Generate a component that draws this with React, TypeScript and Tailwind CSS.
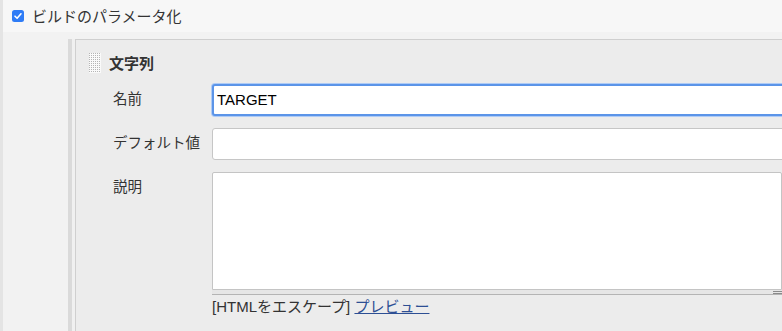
import React from "react";

const font = { fontFamily: "'Liberation Sans', 'Noto Sans CJK JP', sans-serif" };

function Checkbox() {
  return (
    <svg width="12" height="12" viewBox="0 0 12 12">
      <rect x="0" y="0" width="12" height="12" rx="2.5" fill="#2f7cf6" />
      <path d="M3 6.2 L5.1 8.3 L9 3.8" stroke="#fff" strokeWidth="1.6" fill="none" strokeLinecap="round" strokeLinejoin="round" />
    </svg>
  );
}

function Grip() {
  return (
    <svg width="12" height="20" viewBox="0 0 12 20">
      <defs>
        <pattern id="dots" width="2" height="2" patternUnits="userSpaceOnUse">
          <rect width="2" height="2" fill="#fafafa" />
          <rect width="1" height="1" fill="#b5b5b5" />
        </pattern>
      </defs>
      <rect width="12" height="20" fill="url(#dots)" />
    </svg>
  );
}

export default function App() {
  return (
    <div style={font} className="w-[782px] h-[331px] overflow-hidden flex bg-[#f2f2f2] text-[#333]">
      {/* left edge strip */}
      <div className="w-[3px] shrink-0 bg-[#e4e4e4]" />

      <div className="flex-1 flex flex-col min-w-0">
        {/* header row */}
        <div className="h-[32px] shrink-0 bg-[#f7f7f7] flex items-center pl-[9px] gap-[8px]">
          <Checkbox />
          <span className="text-[15px] leading-none">ビルドのパラメータ化</span>
        </div>

        <div className="flex flex-1 pt-[7px]">
          <div className="w-[65px] shrink-0" />
          <div className="w-[4px] shrink-0 bg-[#dadada]" />
          <div className="w-[3px] shrink-0 bg-[#f0f0f0]" />

          {/* parameter panel */}
          <div className="w-[760px] shrink-0 bg-[#ececec] border-l border-t border-[#cfcfcf] pt-[13px] pl-[13px]">
            <div className="h-[20px] flex items-center gap-[8px]">
              <Grip />
              <span className="text-[15px] font-bold leading-none">文字列</span>
            </div>

            <div className="mt-[11px] ml-[24px] grid grid-cols-[99px_570px] gap-y-[12px]">
              <div className="h-[32px] flex items-center text-[14.5px]">名前</div>
              <div className="h-[32px] w-[590px] bg-white border-2 border-[#5b94e8] rounded-[3px] shadow-[0_0_0_1px_#aecbf6] flex items-center px-[3px] text-[15px] text-black">
                TARGET
              </div>

              <div className="h-[32px] flex items-center text-[14.5px]">デフォルト値</div>
              <div className="h-[32px] w-[590px] bg-white border border-[#c6c6c6] rounded-[3px]" />

              <div className="pt-[6px] text-[14.5px] leading-[18px]">説明</div>
              <div className="flex flex-col">
                <div className="h-[118px] bg-white border border-[#c4c4c4] rounded-t-[2px]" />
                <div className="h-[5px] bg-[#e6e6e6] border-b border-[#b4b4b4] flex justify-end items-center">
                  <div className="w-[9px] flex flex-col gap-[1px]">
                    <div className="h-px bg-[#8a8a8a]" />
                    <div className="h-px bg-[#8a8a8a]" />
                  </div>
                </div>
                <div className="mt-[3px] text-[15px] leading-[18px]">
                  [HTMLをエスケープ]{" "}
                  <a href="#" className="text-[#2d4f94] underline">プレビュー</a>
                </div>
              </div>
            </div>
          </div>
        </div>
      </div>
    </div>
  );
}
